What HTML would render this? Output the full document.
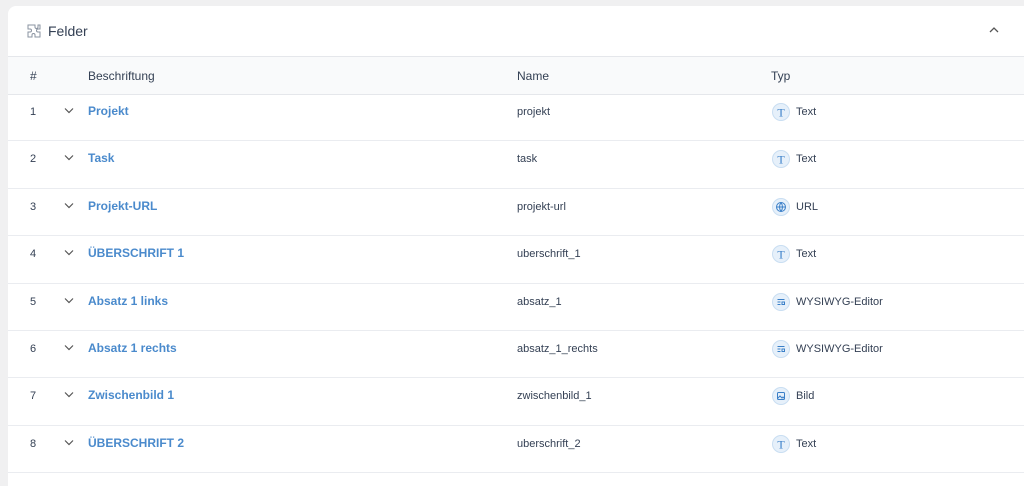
<!DOCTYPE html><html><head><style>
body{margin:0;background:#f0f0f1;font-family:"Liberation Sans",sans-serif;width:1024px;height:478px;overflow:hidden;position:relative}
.card{position:absolute;left:8px;top:6px;width:1030px;height:480px;background:#fff;border-radius:8px 0 0 0}
.hd{position:absolute;top:0;left:0;right:0;height:50px;border-bottom:1px solid #e5e7eb}
.hd span{position:absolute;left:40px;top:17px;font-size:14px;color:#344054}
.th{position:absolute;top:51px;left:0;right:0;height:37px;background:#f9fafb;border-bottom:1px solid #e5e7eb;font-size:12px;color:#344054}
.th div,.r div{position:absolute}
.r{position:absolute;left:0;right:0;height:46.4px;border-bottom:1px solid #eaecf0;font-size:11px;color:#344054}
.r .l{left:80px;top:10px;font-size:12px;font-weight:bold;color:#4a8acc}
.ic{width:18px;height:18px;border-radius:50%;background:#e6f0fa;border:1px solid #c9def2;box-sizing:border-box;left:764px;top:9px}
</style></head><body><div class="card">
<div class="hd"><svg style="position:absolute;left:18px;top:17px" width="16" height="16" viewBox="0 0 16 16" fill="none" stroke="#8a93a0" stroke-width="1"><path d="M6 2h3v2a1.5 1.5 0 0 0 3 0V2h2v4h-2a1.5 1.5 0 0 0 0 3h2v5H9v-2a1.5 1.5 0 0 0-3 0v2H2V9h2a1.5 1.5 0 0 0 0-3H2V2z"/></svg><span>Felder</span>
<svg style="position:absolute;left:980px;top:20px" width="12" height="8" viewBox="0 0 12 8" fill="none" stroke="#555" stroke-width="1.3"><path d="M2 6l4-4 4 4"/></svg></div>
<div class="th"><div style="left:22px;top:12px">#</div><div style="left:80px;top:12px">Beschriftung</div><div style="left:509px;top:12px">Name</div><div style="left:763px;top:12px">Typ</div></div>
<div id="rows"></div>
</div>
<script>
var d=[["Projekt","projekt","T","Text"],["Task","task","T","Text"],["Projekt-URL","projekt-url","G","URL"],["ÜBERSCHRIFT 1","uberschrift_1","T","Text"],["Absatz 1 links","absatz_1","W","WYSIWYG-Editor"],["Absatz 1 rechts","absatz_1_rechts","W","WYSIWYG-Editor"],["Zwischenbild 1","zwischenbild_1","B","Bild"],["ÜBERSCHRIFT 2","uberschrift_2","T","Text"]];
var g={T:'<text x="9" y="13.5" text-anchor="middle" font-family="Liberation Serif" font-size="12" fill="#3a7fc8">T</text>',G:'<g fill="none" stroke="#3a7fc8" stroke-width="1"><circle cx="9" cy="9" r="4.5"/><path d="M4.5 9h9M9 4.5c-2 3-2 6 0 9M9 4.5c2 3 2 6 0 9"/></g>',W:'<g stroke="#3a7fc8" stroke-width="1"><path d="M5.5 6.5h7M5.5 9h3M5.5 11.5h3M10 9h2.5v2.5h-2.5z" fill="none"/></g>',B:'<g fill="none" stroke="#3a7fc8" stroke-width="1"><rect x="5.5" y="5.5" width="7" height="7" rx="1"/><path d="M5.5 11.5l2.5-2.5 2 2 1-1 1.5 1.5"/></g>'};
var h="";d.forEach(function(r,i){h+='<div class="r" style="top:'+(88+i*47.4)+'px"><div style="left:22px;top:12px">'+(i+1)+'</div><svg style="position:absolute;left:56px;top:13px" width="10" height="7" viewBox="0 0 10 7" fill="none" stroke="#555" stroke-width="1.2"><path d="M1 1.5l4 4 4-4"/></svg><div class="l">'+r[0]+'</div><div style="left:509px;top:12px">'+r[1]+'</div><div class="ic"><svg width="18" height="18" style="position:absolute;left:-1px;top:-1px">'+g[r[2]]+'</svg></div><div style="left:788px;top:12px">'+r[3]+'</div></div>'});
document.getElementById("rows").innerHTML=h;
</script></body></html>
